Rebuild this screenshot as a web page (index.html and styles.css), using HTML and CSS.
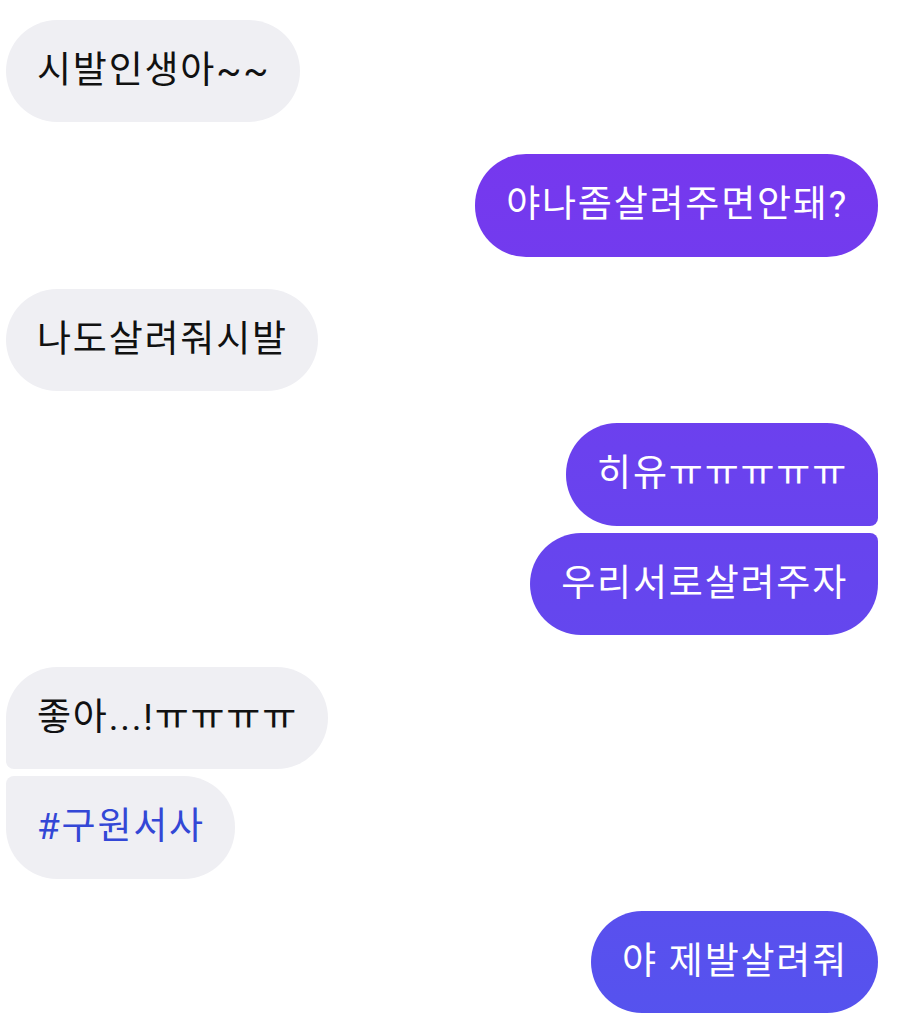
FILE: index.html
```html
<!DOCTYPE html>
<html lang="ko">
<head>
<meta charset="utf-8">
<link rel="stylesheet" href="styles.css">
</head>
<body>
<div class="chat">
  <div class="group in">
    <div class="bubble">시발인생아~~</div>
  </div>
  <div class="group out">
    <div class="bubble">야나좀살려주면안돼?</div>
  </div>
  <div class="group in">
    <div class="bubble">나도살려줘시발</div>
  </div>
  <div class="group out">
    <div class="bubble first">히유ㅠㅠㅠㅠㅠ</div>
    <div class="bubble last">우리서로살려주자</div>
  </div>
  <div class="group in">
    <div class="bubble first">좋아...!ㅠㅠㅠㅠ</div>
    <div class="bubble last tag">#구원서사</div>
  </div>
  <div class="group out">
    <div class="bubble">야 제발살려줘</div>
  </div>
</div>
</body>
</html>
```
FILE: styles.css
```css
html, body {
  margin: 0;
  padding: 0;
  background: #ffffff;
}
body {
  font-family: "Roboto", "Noto Sans CJK KR", sans-serif;
}
.chat {
  display: flex;
  flex-direction: column;
  gap: 32px;
  padding: 20px 22px 0 6px;
}
.group {
  display: flex;
  flex-direction: column;
  gap: 7px;
}
.group.in { align-items: flex-start; }
.group.out { align-items: flex-end; }
.bubble {
  font-size: 37px;
  line-height: 44.4px;
  letter-spacing: 1.8px;
  padding: 29px 30px 29px 31px;
  border-radius: 51px;
  white-space: nowrap;
}
.in .bubble {
  background: #efeff3;
  color: #111111;
}
.out .bubble {
  color: #ffffff;
  background: linear-gradient(to bottom, #7c33ee 0px, #5553ee 1024px);
  background-attachment: fixed;
}
.out .bubble.first { border-bottom-right-radius: 8px; }
.out .bubble.last { border-top-right-radius: 8px; }
.in .bubble.first { border-bottom-left-radius: 8px; }
.in .bubble.last { border-top-left-radius: 8px; }
.bubble.tag { color: #3347d6; }
```
